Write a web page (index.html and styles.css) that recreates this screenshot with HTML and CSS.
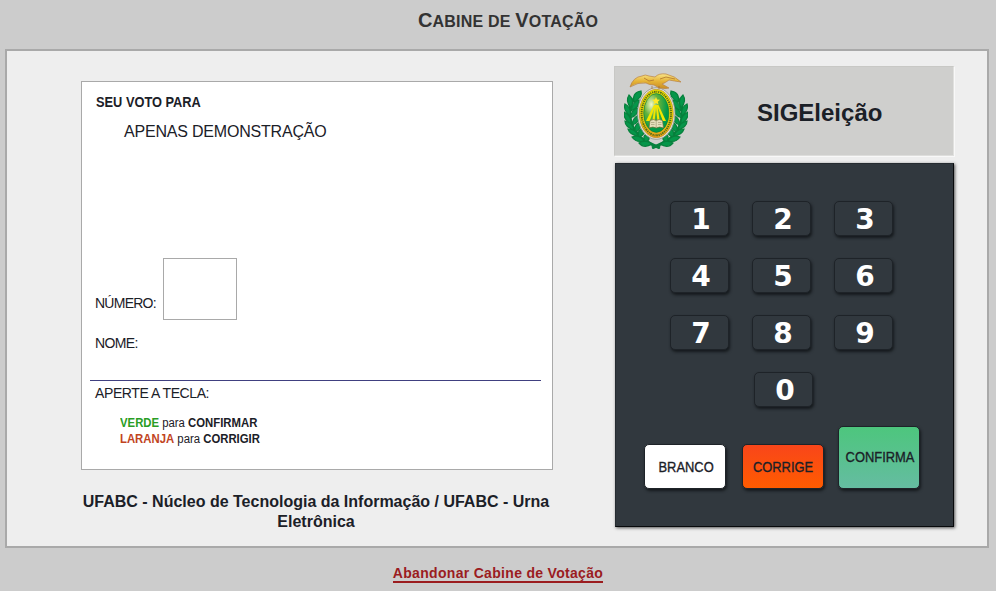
FILE: index.html
```html
<!DOCTYPE html>
<html lang="pt-BR">
<head>
<meta charset="utf-8">
<title>Cabine de Votação</title>
<link rel="stylesheet" href="styles.css">
</head>
<body>
<h1 class="title">C<small>abine de </small>V<small>otação</small></h1>
<main class="booth">
  <section class="left">
    <div class="screen">
      <h2 class="vote-for"><span>SEU VOTO PARA</span></h2>
      <p class="office"><span>APENAS DEMONSTRAÇÃO</span></p>
      <div class="number-row"><label class="label" for="numero">NÚMERO:</label><input class="digit" id="numero" type="text"></div>
      <p class="label name">NOME:</p>
      <div class="help">
        <p class="label press">APERTE A TECLA:</p>
        <p class="hint"><span><b class="green">VERDE</b> para <b>CONFIRMAR</b></span></p>
        <p class="hint"><span><b class="orange">LARANJA</b> para <b>CORRIGIR</b></span></p>
      </div>
    </div>
    <p class="election">UFABC - Núcleo de Tecnologia da Informação / UFABC - Urna Eletrônica</p>
  </section>
  <section class="machine">
    <header class="brand">
      <svg class="crest" viewBox="0 0 64 76" width="64" height="76">
        <defs>
          <radialGradient id="shine" cx=".3" cy=".28" r=".65"><stop offset="0" stop-color="#f4f8c8"/><stop offset=".45" stop-color="#63b23d"/><stop offset="1" stop-color="#009a48"/></radialGradient>
          <linearGradient id="gold" x2="0" y2="1"><stop offset="0" stop-color="#f8e58b"/><stop offset=".5" stop-color="#e6b436"/><stop offset="1" stop-color="#c98d24"/></linearGradient>
          <linearGradient id="ring" x2="0" y2="1"><stop offset="0" stop-color="#e6df00"/><stop offset=".65" stop-color="#e9cb0b"/><stop offset="1" stop-color="#e59b1c"/></linearGradient>
          <g id="branch">
            <path d="M36 75Q24 70 17 65Q4 52 6 36Q8 24 17 19" fill="none" stroke="#07823d" stroke-width="3"/>
            <g fill="#06964a" stroke="#07803c" stroke-width="1.2">
              <path d="M10 29Q8 19 17 18Q19 24 10 29Z"/>
              <path d="M7 35Q1 28 5 22Q11 27 7 35Z"/>
              <path d="M7 38Q9 28 15 27Q16 34 7 38Z"/>
              <path d="M6 43Q-1 37 1 31Q8 35 6 43Z"/>
              <path d="M6 45Q8 36 14 35Q15 42 6 45Z"/>
              <path d="M7 51Q-1 46 0 39Q8 43 7 51Z"/>
              <path d="M8 52Q9 44 15 42Q17 49 8 52Z"/>
              <path d="M10 57Q1 54 1 48Q9 50 10 57Z"/>
              <path d="M11 59Q10 51 16 49Q19 56 11 59Z"/>
              <path d="M14 63Q6 62 4 56Q12 56 14 63Z"/>
              <path d="M15 64Q13 57 18 56Q23 61 15 64Z"/>
              <path d="M20 68Q12 70 8 64Q16 61 20 68Z"/>
              <path d="M21 69Q18 62 23 61Q28 67 21 69Z"/>
              <path d="M28 71Q20 76 15 70Q22 66 28 71Z"/>
            </g>
          </g>
        </defs>
        <use href="#branch"/>
        <use href="#branch" transform="matrix(-1 0 0 1 64 0)"/>
        <ellipse cx="32.3" cy="40.5" rx="18.7" ry="25.8" fill="#e9e9e5" stroke="#8b9187" stroke-width=".8"/>
        <ellipse cx="32.3" cy="40.5" rx="17" ry="24.2" fill="url(#ring)" stroke="#b57d12" stroke-width=".6"/>
        <ellipse cx="32.3" cy="40.5" rx="14.7" ry="21.8" fill="none" stroke="#576c18" stroke-width="2" stroke-dasharray="1.2 .8 1.6 .8 1 .9"/>
        <ellipse cx="32.3" cy="40" rx="12.6" ry="19.4" fill="url(#shine)" stroke="#097b39" stroke-width=".6"/>
        <path d="M32 24l1.1 2.5 2.9.3-2.2 1.9.7 2.9-2.5-1.5-2.5 1.5.7-2.9-2.2-1.9 2.9-.3Z" fill="#ffe928"/>
        <path d="M30 32h4.5l7.5 16h-3.2l-5.1-14 2.2 15h-2.4l-1.5-15-1.5 15h-2.4l2.5-15-4.8 14H22Z" fill="#f4e600"/>
        <path d="M26 47.5Q29.5 45.5 32.2 47.5Q35 45.5 38.5 47.5L39.5 55Q35.5 53 32.3 55Q29 53 25 55Z" fill="#e6dfbc" stroke="#776b38" stroke-width=".7"/>
        <path d="M32.2 47.5v7M27 49.5h3.5M34 49.5h3.5M27 51.5h3.5M34 51.5h3.5" stroke="#99906b" stroke-width=".6"/>
        <path d="M6 14Q9 4 18 3Q21 1 25 3L31 4Q35 0 42 1Q51 3 57 9Q50 8 45 7Q41 10 38 11L45 15Q37 17 30 12Q25 12 22 10Q14 9 6 14Z" fill="url(#gold)" stroke="#b98245" stroke-width=".7"/>
        <path d="M20 5l5 3 5-1M36 6l6-2 9 2M28 13v3M35 13v3" fill="none" stroke="#a76a27" stroke-width=".7"/>
      </svg>
      <div class="brand-name">SIGEleição</div>
    </header>
    <div class="keypad">
      <div class="digits">
        <button>1</button><button>2</button><button>3</button>
        <button>4</button><button>5</button><button>6</button>
        <button>7</button><button>8</button><button>9</button>
        <button class="zero">0</button>
      </div>
      <div class="actions">
        <button class="blank"><span>BRANCO</span></button>
        <button class="fix"><span>CORRIGE</span></button>
        <button class="confirm"><span>CONFIRMA</span></button>
      </div>
    </div>
  </section>
</main>
<footer class="footer"><a href="#">Abandonar Cabine de Votação</a></footer>
</body>
</html>
```
FILE: styles.css
```css
* { box-sizing: border-box; }
body {
  margin: 0;
  height: 591px;
  overflow: hidden;
  background: #ccc;
  color: #1b2027;
  font-family: "Liberation Sans", Arial, sans-serif;
}
h1, h2, p { margin: 0; }
.title {
  height: 49px;
  padding: 9px 0 0 20px;
  text-align: center;
  font-size: 20px;
  line-height: 22px;
  letter-spacing: .2px;
  color: #333;
}
.title small { font-size: 16px; text-transform: uppercase; }
.booth {
  display: flex;
  width: 984px;
  height: 499px;
  margin-left: 5px;
  border: 2px solid #a9a9a9;
  background: #eee;
}
.left { width: 472px; margin: 30px 0 0 74px; }
.screen {
  height: 389px;
  padding: 12px 11px 0 8px;
  border: 1px solid #a9a9a9;
  background: #fff;
}
.vote-for { padding-left: 6px; font-size: 14px; line-height: 16px; }
.vote-for span { display: inline-block; transform: scaleX(.915); transform-origin: left; }
.office { margin: 12px 0 0 34px; font-size: 16px; line-height: 20px; letter-spacing: -.2px; }
.number-row { display: flex; align-items: flex-end; height: 62px; margin: 116px 0 0 5px; }
.label { font-size: 14px; line-height: 16px; letter-spacing: -.4px; }
.number-row .label { width: 68px; margin-bottom: 9px; letter-spacing: -.75px; }
.digit { width: 74px; height: 62px; border: 1px solid #a9a9a9; background: #fff; padding: 0; }
.name { margin: 15px 0 0 5px; letter-spacing: -.65px; }
.help { margin-top: 29px; border-top: 1px solid #404080; }
.press { margin: 4px 0 14px 5px; }
.hint { margin-left: 30px; font-size: 12px; line-height: 16px; }
.hint span { display: inline-block; transform: scaleX(.945); transform-origin: left; }
.green { color: #2a9d24; }
.orange { color: #c1441e; }
.election { margin: 22px 1px 0 -1px; padding: 0 2px; text-align: center; font-size: 16px; line-height: 20px; font-weight: bold; }
.machine { width: 340px; margin: 15px 0 0 61px; }
.brand {
  display: flex;
  height: 90px;
  padding: 6px 0 0 9px;
  border: 1px solid #c8c8c5;
  border-right-color: #e0e0de;
  border-bottom-color: #dededc;
  background: #cfcfcd;
  box-shadow: 1px 1px 0 #f8f8f8;
}
.crest { flex: none; }
.brand-name { margin: 26px 0 0 69px; font-size: 24px; line-height: 28px; font-weight: bold; }
.keypad {
  height: 364px;
  margin: 7px 0 0 1px;
  width: 339px;
  padding: 37px 0 0 28px;
  border: 1px solid #262c31;
  border-right-color: #080a0c;
  border-bottom-color: #080a0c;
  background: #31383e;
  box-shadow: 1px 1px 3px #555;
}
button { padding: 0; font-family: inherit; color: #fff; border: 1px solid #1e2328; }
.digits {
  display: grid;
  grid-template-columns: repeat(3, 60px);
  grid-auto-rows: 36px;
  gap: 21px 22px;
  margin-left: 26px;
}
.digits button {
  height: 35px;
  margin-right: 1px;
  padding: 2px 0 0 3px;
  border-radius: 5px;
  background: #31383e;
  box-shadow: 1px 2px 3px #15191d;
  font: bold 28px/31px "DejaVu Sans", Verdana, sans-serif;
}
.digits .zero { grid-column: 2; margin: 0 -1px 0 2px; }
.actions { display: flex; align-items: flex-end; gap: 16px; margin-top: 18px; }
.actions button {
  width: 82px;
  height: 45px;
  border-radius: 5px;
  font-size: 15px;
  color: #1b2027;
  box-shadow: 1px 2px 3px #15191d;
  -webkit-text-stroke: .35px #1b2027;
}
.actions .blank { background: #fff; padding-left: 2px; }
.actions .fix { background: linear-gradient(#f9461a, #ff5b00); margin-right: -2px; }
.actions .confirm { height: 63px; padding: 0 0 2px 2px; background: linear-gradient(#4dc67d, #65bca1); }
.actions span { display: inline-block; transform: scaleX(.86); margin: 0 -10px; white-space: nowrap; }
.footer { padding-top: 17px; text-align: center; font-size: 14px; line-height: 16px; font-weight: bold; letter-spacing: .31px; }
.footer a { display: inline-block; color: #9b1c1f; text-decoration: none; border-bottom: 2px solid #9b1c1f; line-height: 15px; }
```
